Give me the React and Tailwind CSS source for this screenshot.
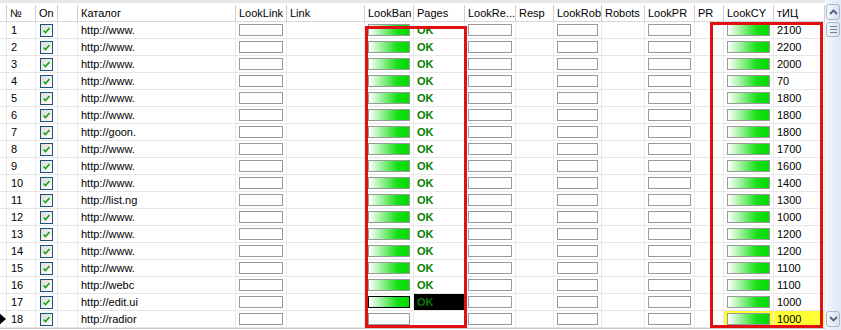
import React from "react";

const cols =
  "grid grid-cols-[7px_29px_22px_20px_158px_51px_78px_49px_51px_51px_38px_48px_43px_50px_29px_50px_51px]";

const headers = ["", "№", "On", "", "Каталог", "LookLink", "Link", "LookBan", "Pages", "LookRe...", "Resp", "LookRob", "Robots", "LookPR", "PR", "LookCY", "тИЦ"];

const rows = [
  ["http://www.", "2100"],
  ["http://www.", "2200"],
  ["http://www.", "2000"],
  ["http://www.", "70"],
  ["http://www.", "1800"],
  ["http://www.", "1800"],
  ["http://goon.", "1800"],
  ["http://www.", "1700"],
  ["http://www.", "1600"],
  ["http://www.", "1400"],
  ["http://list.ng", "1300"],
  ["http://www.", "1000"],
  ["http://www.", "1200"],
  ["http://www.", "1200"],
  ["http://www.", "1100"],
  ["http://webc", "1100"],
  ["http://edit.ui", "1000"],
  ["http://radior", "1000"],
];

const Bar = ({ full, dark }) => (
  <div
    className={
      "mx-[3px] h-[12px] border " +
      (dark ? "border-black " : "border-[#9a9a9a] ") +
      (full ? "bg-[linear-gradient(to_right,#ffffff_0%,#8ef08e_35%,#17e017_70%,#00dc00_100%)]" : "bg-white")
    }
  />
);

const Check = () => (
  <div className="w-[13px] h-[13px] border border-[#1c5180] bg-[linear-gradient(135deg,#dcdcd6,#ffffff)] flex items-center justify-center">
    <svg width="9" height="9" viewBox="0 0 9 9">
      <path d="M1.5 4.5 L3.5 6.5 L7.5 2" fill="none" stroke="#21a121" strokeWidth="1.7" />
    </svg>
  </div>
);

const Cell = ({ children, className = "" }) => (
  <div className={"border-r border-[#ebebeb] flex items-center overflow-hidden whitespace-nowrap " + className}>
    {children}
  </div>
);

const ScrollBtn = ({ up }) => (
  <div className="mx-[1px] h-[16px] rounded-[3px] border border-[#a7b6cb] bg-[linear-gradient(to_right,#f6f9fd,#d5e2f2)] flex items-center justify-center">
    <svg width="9" height="6" viewBox="0 0 9 6">
      <path d={up ? "M1 5 L4.5 1.5 L8 5" : "M1 1 L4.5 4.5 L8 1"} fill="none" stroke="#4d5f80" strokeWidth="1.8" />
    </svg>
  </div>
);

export default function App() {
  return (
    <div className="relative w-[841px] h-[330px] bg-white overflow-hidden font-['Liberation_Sans',Arial,sans-serif] text-[11px] text-black">
      <div className="flex">
        <div className="w-[825px]">
          <div className="h-[3px] bg-[#e6e6e6]" />
          <div className={cols + " h-[19px] border-b border-[#d6d6d6]"}>
            {headers.map((h, i) => (
              <div
                key={i}
                className="border-r border-[#cfcfcf] flex items-center pl-[3px] overflow-hidden whitespace-nowrap mt-[2px]"
              >
                {h}
              </div>
            ))}
          </div>
          {rows.map(([url, tic], idx) => {
            const n = idx + 1;
            const last = n === 18;
            const sel = n === 17;
            return (
              <div key={n} className={cols + " h-[17px] border-b border-[#e6e6e6]"}>
                <Cell>
                  {last && (
                    <svg width="7" height="12" viewBox="0 0 7 12">
                      <path d="M0 0 L7 6 L0 12 Z" fill="#000" />
                    </svg>
                  )}
                </Cell>
                <Cell className="pl-[4px]">{n}</Cell>
                <Cell className="justify-center">
                  <Check />
                </Cell>
                <Cell />
                <Cell className="pl-[3px]">
                  <div className="w-[57px] overflow-hidden">{url}</div>
                </Cell>
                <Cell>
                  <div className="flex-1">
                    <Bar />
                  </div>
                </Cell>
                <Cell />
                <Cell>
                  <div className="flex-1">
                    <Bar full={!last} dark={sel} />
                  </div>
                </Cell>
                <Cell className={"pl-[3px] font-bold " + (sel ? "bg-black text-[#0a7a0a]" : "text-[#008000]")}>
                  {last ? "" : "OK"}
                </Cell>
                <Cell>
                  <div className="flex-1">
                    <Bar />
                  </div>
                </Cell>
                <Cell />
                <Cell>
                  <div className="flex-1">
                    <Bar />
                  </div>
                </Cell>
                <Cell />
                <Cell>
                  <div className="flex-1">
                    <Bar />
                  </div>
                </Cell>
                <Cell />
                <Cell className={last ? "bg-[#ffff33]" : ""}>
                  <div className="flex-1">
                    <Bar full />
                  </div>
                </Cell>
                <Cell className={"pl-[3px] " + (last ? "bg-[#ffff33]" : "")}>{tic}</Cell>
              </div>
            );
          })}
          <div className="h-[1px] bg-[#c8c8c8]" />
        </div>
        <div className="w-[16px] h-[330px] bg-[linear-gradient(to_right,#f4f7fb,#dfe8f4)] flex flex-col pt-[4px]">
          <ScrollBtn up />
          <div className="mt-[2px] mx-[1px] h-[15px] rounded-[3px] border border-[#a7b6cb] bg-[linear-gradient(to_right,#f6f9fd,#d5e2f2)] flex flex-col items-center justify-center gap-[2px]">
            <div className="w-[7px] h-[1px] bg-[#6c7fa0]" />
            <div className="w-[7px] h-[1px] bg-[#6c7fa0]" />
            <div className="w-[7px] h-[1px] bg-[#6c7fa0]" />
          </div>
          <div className="flex-1" />
          <div className="mb-[3px]">
            <ScrollBtn />
          </div>
        </div>
      </div>
      <div className="absolute left-[365px] top-[26px] w-[102px] h-[302px] border-[3px] border-[#e01010]" />
      <div className="absolute left-[710px] top-[22px] w-[113px] h-[306px] border-[3px] border-[#e01010]" />
    </div>
  );
}
